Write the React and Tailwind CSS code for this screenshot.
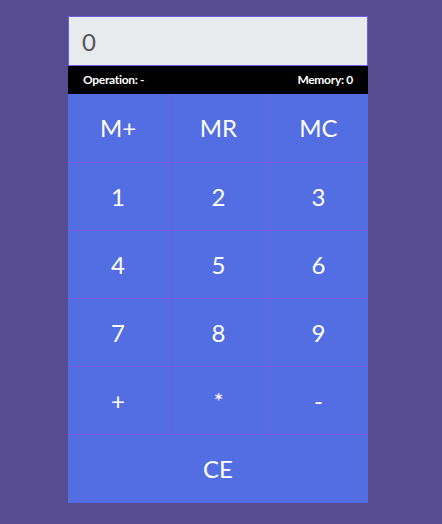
import React, { useState } from "react";

const keys = ["M+", "MR", "MC", "1", "2", "3", "4", "5", "6", "7", "8", "9", "+", "*", "-"];

export default function App() {
  const [display, setDisplay] = useState("0");
  const [operation] = useState("-");
  const [memory] = useState(0);

  return (
    <div className="min-h-screen bg-[#574c8f] pt-4 pl-[68px]" style={{ fontFamily: "Lato, 'Open Sans', sans-serif" }}>
      <div className="w-[300px]">
        <input
          type="text"
          value={display}
          onChange={(e) => setDisplay(e.target.value)}
          className="block w-full h-[50px] bg-[#e8ebee] border border-[#6f5de6] px-[13px] text-[24px] text-[#555] focus:outline-none"
        />
        <div className="bg-black h-[28px] px-[15px] flex items-center justify-between text-white text-[12px] font-bold tracking-[-0.3px]">
          <span>Operation: {operation}</span>
          <span>Memory: {memory}</span>
        </div>
        <div className="grid grid-cols-[100px_99px_99px] grid-rows-[68px_67px_67px_67px_67px_68px] gap-px bg-[#7b5ce6]">
          {keys.map((k) => (
            <button key={k} className="bg-[#536de2] text-white text-[24px] flex items-center justify-center">
              {k}
            </button>
          ))}
          <button className="col-span-3 bg-[#536de2] text-white text-[24px] flex items-center justify-center">
            CE
          </button>
        </div>
      </div>
    </div>
  );
}
